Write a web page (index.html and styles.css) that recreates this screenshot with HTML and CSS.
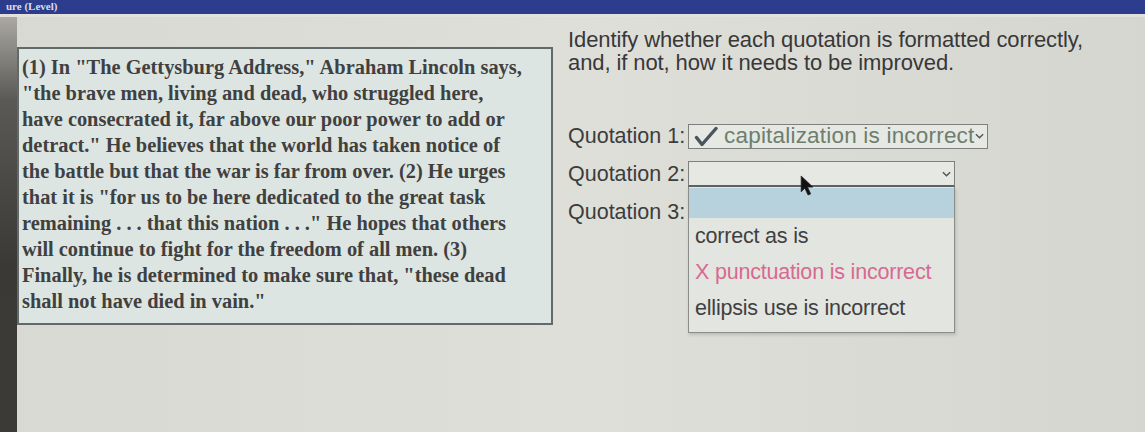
FILE: index.html
```html
<!DOCTYPE html>
<html lang="en">
<head>
<meta charset="utf-8">
<title>Quotations</title>
<link rel="stylesheet" href="styles.css">
</head>
<body>
<div class="topbar"><span class="title">ure (Level)</span></div>
<div class="page">
  <div class="bezel"></div>
  <div class="content">
    <div class="passage">
      <p>(1) In "The Gettysburg Address," Abraham Lincoln says,<br>
      "the brave men, living and dead, who struggled here,<br>
      have consecrated it, far above our poor power to add or<br>
      detract." He believes that the world has taken notice of<br>
      the battle but that the war is far from over. (2) He urges<br>
      that it is "for us to be here dedicated to the great task<br>
      remaining . . . that this nation . . ." He hopes that others<br>
      will continue to fight for the freedom of all men. (3)<br>
      Finally, he is determined to make sure that, "these dead<br>
      shall not have died in vain."</p>
    </div>
    <div class="task">
      <p class="instructions">Identify whether each quotation is formatted correctly,<br>and, if not, how it needs to be improved.</p>
      <div class="quotes">
        <div class="qrow">
          <span class="qlabel">Quotation 1:</span>
          <div class="select select-wide">
            <svg class="check" viewBox="0 0 24 20" width="24" height="21"><path d="M2.5 11 L8 18 L22 2" fill="none" stroke="#48545e" stroke-width="3.4" stroke-linecap="round" stroke-linejoin="round"/></svg>
            <span class="chosen">capitalization is incorrect</span>
            <svg class="caret" viewBox="0 0 10 6" width="9" height="6"><path d="M1 1 L5 5 L9 1" fill="none" stroke="#555" stroke-width="1.6"/></svg>
          </div>
        </div>
        <div class="qrow">
          <span class="qlabel">Quotation 2:</span>
          <div class="dropwrap">
            <div class="select select-open">
              <span class="chosen"></span>
              <svg class="caret" viewBox="0 0 10 6" width="9" height="6"><path d="M1 1 L5 5 L9 1" fill="none" stroke="#555" stroke-width="1.6"/></svg>
            </div>
            <ul class="menu">
              <li class="opt opt-blank"></li>
              <li class="opt">correct as is</li>
              <li class="opt opt-wrong">X punctuation is incorrect</li>
              <li class="opt">ellipsis use is incorrect</li>
            </ul>
            <svg class="cursor" viewBox="0 0 14 20" width="15" height="21"><path d="M1 1 L1 16 L4.5 12.5 L7.5 19 L10 18 L7 11.5 L12 11.5 Z" fill="#111" stroke="#222" stroke-width="0.8"/></svg>
          </div>
        </div>
        <div class="qrow">
          <span class="qlabel">Quotation 3:</span>
        </div>
      </div>
    </div>
  </div>
</div>
</body>
</html>
```
FILE: styles.css
```css
html, body {
  margin: 0;
  padding: 0;
}
body {
  width: 1145px;
  height: 432px;
  overflow: hidden;
  background: #dbdbd6;
  font-family: "Liberation Sans", Arial, sans-serif;
}
.topbar {
  height: 14px;
  background: #2b3d8c;
  overflow: hidden;
  border-bottom: 3px solid #e4e1da;
}
.title {
  display: block;
  color: #dcdce8;
  font-family: "Liberation Serif", serif;
  font-weight: bold;
  font-size: 11px;
  line-height: 13px;
  padding-left: 6px;
}
.page {
  display: flex;
  height: 415px;
}
.bezel {
  width: 17px;
  flex: none;
  background: linear-gradient(to bottom, #a9a8a2 0%, #5a5955 20%, #3a3936 60%, #3b3a37 100%);
}
.content {
  display: flex;
  align-items: flex-start;
  flex: 1;
  background: linear-gradient(to right, #d9d9d4 0%, #dfdfda 50%, #d6d6d1 100%);
}
.passage {
  margin-top: 30px;
  width: 532px;
  height: 274px;
  background: #dde5e2;
  border: 2px solid #626a69;
  box-sizing: content-box;
  flex: none;
}
.passage p {
  margin: 0;
  padding: 5px 0 0 3px;
  font-family: "Liberation Serif", "Times New Roman", serif;
  font-weight: bold;
  font-size: 20.4px;
  line-height: 26px;
  color: #404040;
  white-space: nowrap;
}
.task {
  margin-left: 15px;
  padding-top: 11px;
  color: #383838;
}
.instructions {
  margin: 0;
  font-size: 22px;
  line-height: 23px;
  letter-spacing: -0.1px;
  white-space: nowrap;
}
.quotes {
  margin-top: 43px;
  display: flex;
  flex-direction: column;
}
.qrow {
  display: flex;
  align-items: center;
  height: 38px;
}
.qlabel {
  font-size: 21.5px;
  width: 120px;
  flex: none;
  color: #3c3c3c;
  white-space: nowrap;
}
.select {
  height: 23px;
  border: 1px solid #7d807c;
  background: #e6e8e3;
  display: flex;
  align-items: center;
  padding: 0 3px 0 5px;
  box-sizing: content-box;
}
.select-wide {
  width: 290px;
}
.select-open {
  width: 257px;
  border-bottom: 2px solid #5e6260;
}
.check {
  flex: none;
  margin-right: 6px;
}
.chosen {
  flex: 1;
  font-size: 22.5px;
  letter-spacing: 0.2px;
  color: #6d7e6e;
  white-space: nowrap;
  overflow: hidden;
}
.caret {
  flex: none;
}
.dropwrap {
  position: relative;
}
.menu {
  position: absolute;
  left: 0;
  top: 100%;
  width: 265px;
  margin: 0;
  padding: 1px 0 6px;
  list-style: none;
  background: #e3e5e1;
  border: 1px solid #8a8d89;
  border-top: none;
  box-shadow: 1px 2px 3px rgba(0,0,0,0.15);
  z-index: 2;
}
.opt {
  height: 36px;
  line-height: 36px;
  padding-left: 6px;
  font-size: 21.5px;
  letter-spacing: -0.2px;
  color: #404040;
  white-space: nowrap;
}
.opt-blank {
  height: 30px;
  background: #b8d2dd;
}
.opt-wrong {
  color: #d8698f;
}
.cursor {
  position: absolute;
  left: 112px;
  top: 14px;
  z-index: 3;
}
```
